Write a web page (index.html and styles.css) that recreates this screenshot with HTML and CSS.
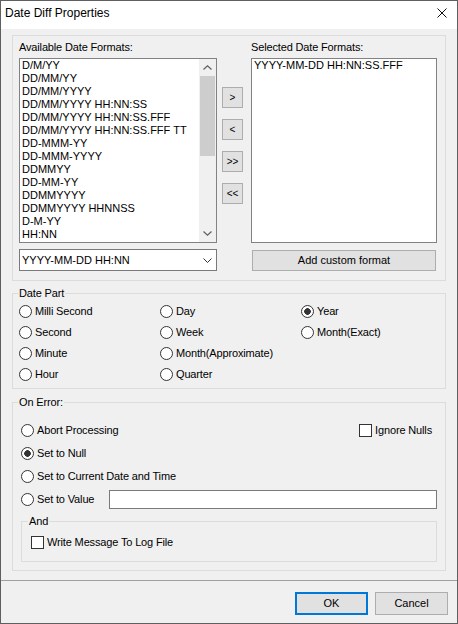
FILE: index.html
```html
<!DOCTYPE html>
<html lang="en">
<head>
    <meta charset="UTF-8">
    <meta name="viewport" content="width=device-width, initial-scale=1.0">
    <title>Date Diff Properties</title>
    <link rel="stylesheet" href="styles.css">
</head>
<body>
    <div class="dialog">
        <div class="titlebar">
            <span class="title">Date Diff Properties</span>
            <svg class="close" width="10" height="10" viewBox="0 0 10 10">
                <path d="M0.5 0.5 L9.5 9.5 M9.5 0.5 L0.5 9.5" stroke="#111" stroke-width="1" fill="none"/>
            </svg>
        </div>

        <div class="content">
            <div class="formats">
                <span class="caption">Available Date Formats:</span>
                <span></span>
                <span class="caption">Selected Date Formats:</span>

                <div class="listbox">
                    <ul class="items">
                        <li>D/M/YY</li>
                        <li>DD/MM/YY</li>
                        <li>DD/MM/YYYY</li>
                        <li>DD/MM/YYYY HH:NN:SS</li>
                        <li>DD/MM/YYYY HH:NN:SS.FFF</li>
                        <li>DD/MM/YYYY HH:NN:SS.FFF TT</li>
                        <li>DD-MMM-YY</li>
                        <li>DD-MMM-YYYY</li>
                        <li>DDMMYY</li>
                        <li>DD-MM-YY</li>
                        <li>DDMMYYYY</li>
                        <li>DDMMYYYY HHNNSS</li>
                        <li>D-M-YY</li>
                        <li>HH:NN</li>
                    </ul>
                    <div class="scrollbar">
                        <div class="arrow">
                            <svg width="9" height="5" viewBox="0 0 9 5"><path d="M0.5 4.5 L4.5 0.8 L8.5 4.5" stroke="#606060" stroke-width="1.2" fill="none"/></svg>
                        </div>
                        <div class="track"><div class="thumb"></div></div>
                        <div class="arrow">
                            <svg width="9" height="5" viewBox="0 0 9 5"><path d="M0.5 0.5 L4.5 4.2 L8.5 0.5" stroke="#606060" stroke-width="1.2" fill="none"/></svg>
                        </div>
                    </div>
                </div>

                <div class="movers">
                    <button class="btn mover">&gt;</button>
                    <button class="btn mover">&lt;</button>
                    <button class="btn mover">&gt;&gt;</button>
                    <button class="btn mover">&lt;&lt;</button>
                </div>

                <div class="listbox">
                    <ul class="items">
                        <li>YYYY-MM-DD HH:NN:SS.FFF</li>
                    </ul>
                </div>

                <div class="combo">
                    <span>YYYY-MM-DD HH:NN</span>
                    <svg width="9" height="5" viewBox="0 0 9 5"><path d="M0.5 0.5 L4.5 4.5 L8.5 0.5" stroke="#333" stroke-width="1" fill="none"/></svg>
                </div>
                <span></span>
                <button class="btn wide">Add custom format</button>
            </div>

            <fieldset class="datepart">
                <legend>Date Part</legend>
                <div class="parts">
                    <label class="option"><input type="radio" name="part">Milli Second</label>
                    <label class="option"><input type="radio" name="part">Day</label>
                    <label class="option"><input type="radio" name="part" checked>Year</label>
                    <label class="option"><input type="radio" name="part">Second</label>
                    <label class="option"><input type="radio" name="part">Week</label>
                    <label class="option"><input type="radio" name="part">Month(Exact)</label>
                    <label class="option"><input type="radio" name="part">Minute</label>
                    <label class="option"><input type="radio" name="part">Month(Approximate)</label>
                    <span></span>
                    <label class="option"><input type="radio" name="part">Hour</label>
                    <label class="option"><input type="radio" name="part">Quarter</label>
                </div>
            </fieldset>

            <fieldset class="onerror">
                <legend>On Error:</legend>
                <div class="row">
                    <label class="option"><input type="radio" name="err">Abort Processing</label>
                    <label class="option nulls"><input type="checkbox">Ignore Nulls</label>
                </div>
                <div class="row">
                    <label class="option"><input type="radio" name="err" checked>Set to Null</label>
                </div>
                <div class="row">
                    <label class="option"><input type="radio" name="err">Set to Current Date and Time</label>
                </div>
                <div class="row">
                    <label class="option"><input type="radio" name="err">Set to Value</label>
                    <input type="text" class="value-input">
                </div>

                <fieldset class="and">
                    <legend>And</legend>
                    <label class="option"><input type="checkbox">Write Message To Log File</label>
                </fieldset>
            </fieldset>
        </div>

        <div class="footer">
            <button class="btn action default">OK</button>
            <button class="btn action">Cancel</button>
        </div>
    </div>
</body>
</html>
```

FILE: styles.css
```css
* {
    box-sizing: border-box;
}

body {
    margin: 0;
    font-family: "Liberation Sans", Arial, sans-serif;
    font-size: 11px;
    line-height: 13px;
    letter-spacing: -0.15px;
    color: #000;
    background: #fff;
}

.dialog {
    width: 458px;
    height: 624px;
    border: 1px solid #5f5f5f;
    background: #f0f0f0;
    display: flex;
    flex-direction: column;
}

.titlebar {
    flex: none;
    height: 28px;
    background: #fff;
    display: flex;
    align-items: center;
    justify-content: space-between;
    padding: 0 10px 4px 4px;
}

.title {
    font-size: 12px;
    line-height: 15px;
    letter-spacing: 0;
}

.content {
    padding: 6px 11px 0;
}

/* top frame with the two lists */
.formats {
    border: 1px solid #dcdcdc;
    padding: 5px 8px 9px 6px;
    display: grid;
    grid-template-columns: 198px 34px 186px;
}

.caption {
    margin-bottom: 4px;
}

.listbox {
    height: 185px;
    background: #fff;
    border: 1px solid #828282;
    display: flex;
}

.items {
    flex: 1;
    list-style: none;
    margin: 0;
    padding: 0 2px;
    white-space: nowrap;
    overflow: hidden;
    letter-spacing: 0;
}

.scrollbar {
    width: 17px;
    display: flex;
    flex-direction: column;
    background: #f0f0f0;
}

.arrow {
    height: 17px;
    display: flex;
    align-items: center;
    justify-content: center;
}

.arrow svg {
    display: block;
}

.track {
    flex: 1;
}

.thumb {
    height: 80px;
    margin: 0 1px;
    background: #cdcdcd;
}

.movers {
    display: flex;
    flex-direction: column;
    gap: 11px;
    padding: 29px 0 0 5px;
}

.btn {
    font: inherit;
    color: #000;
    background: #e1e1e1;
    border: 1px solid #adadad;
    padding: 0;
    margin: 0;
}

.mover {
    width: 21px;
    height: 21px;
    font-size: 10px;
}

.combo {
    margin-top: 6px;
    height: 22px;
    background: #fff;
    border: 1px solid #7a7a7a;
    display: flex;
    align-items: center;
    justify-content: space-between;
    padding: 0 4px 0 2px;
    letter-spacing: 0;
}

.combo svg {
    display: block;
}

.wide {
    margin: 7px 1px 0;
    height: 21px;
}

/* group boxes */
fieldset {
    margin: 0;
    min-width: 0;
    border: 1px solid #dcdcdc;
}

legend {
    padding: 0 1px;
    margin-left: -3px;
    line-height: 13px;
}

.datepart {
    margin-top: 6px;
    padding: 1px 8px 3px 6px;
}

.datepart legend {
    margin-left: -1px;
}

.parts {
    display: grid;
    grid-template-columns: 141px 141px auto;
    grid-auto-rows: 21px;
}

.option {
    display: flex;
    align-items: center;
    gap: 3px;
    white-space: nowrap;
}

input[type=radio],
input[type=checkbox] {
    appearance: none;
    -webkit-appearance: none;
    flex: none;
    width: 13px;
    height: 13px;
    margin: 0;
    border: 1px solid #333;
    background: #fff;
}

input[type=radio] {
    border-radius: 50%;
}

input[type=radio]:checked {
    background: radial-gradient(circle, #333 0 3px, #fff 3.6px);
}

.onerror {
    margin-top: 7px;
    padding: 10px 8px 8px;
}

.row {
    height: 23px;
    display: flex;
    align-items: center;
    justify-content: space-between;
}

.nulls {
    margin-right: 5px;
}

.value-input {
    width: 328px;
    height: 19px;
    margin: 0;
    border: 1px solid #7a7a7a;
    background: #fff;
    font: inherit;
}

.and {
    margin-top: 4px;
    padding: 4px 9px 8px;
}

.and .option {
    height: 21px;
}

.footer {
    margin-top: auto;
    border-top: 1px solid #a0a0a0;
    padding: 11px 9px 8px;
    display: flex;
    justify-content: flex-end;
    gap: 7px;
}

.action {
    width: 73px;
    height: 23px;
}

.default {
    border-color: #0078d7;
    box-shadow: inset 0 0 0 1px #0078d7;
}
```
